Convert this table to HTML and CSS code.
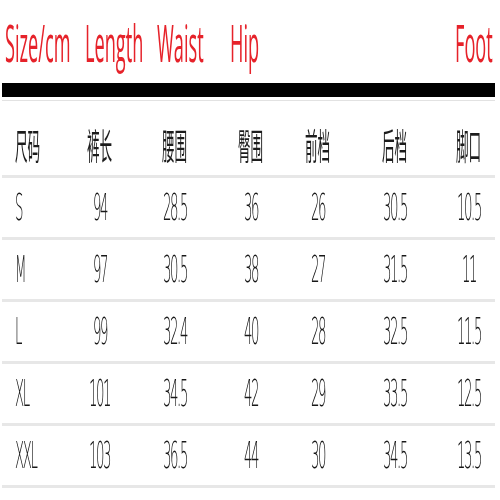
FILE: index.html
```html
<!DOCTYPE html>
<html lang="zh">
<head>
<meta charset="utf-8">
<title>Size chart</title>
<link rel="stylesheet" href="styles.css">
</head>
<body>
<div class="sheet">
  <div class="title">
    <span class="tx">Size/cm</span>
    <span class="tx">Length</span>
    <span class="tx">Waist</span>
    <span class="tx">Hip</span>
    <span class="tx foot">Foot</span>
  </div>
  <div class="bar"></div>
  <div class="table">
    <div class="row head">
      <span class="tx c1">尺码</span><span class="tx">裤长</span><span class="tx">腰围</span><span class="tx">臀围</span><span class="tx">前档</span><span class="tx">后档</span><span class="tx">脚口</span>
    </div>
    <div class="row">
      <span class="tx c1">S</span><span class="tx">94</span><span class="tx">28.5</span><span class="tx">36</span><span class="tx">26</span><span class="tx">30.5</span><span class="tx">10.5</span>
    </div>
    <div class="row">
      <span class="tx c1">M</span><span class="tx">97</span><span class="tx">30.5</span><span class="tx">38</span><span class="tx">27</span><span class="tx">31.5</span><span class="tx">11</span>
    </div>
    <div class="row">
      <span class="tx c1">L</span><span class="tx">99</span><span class="tx">32.4</span><span class="tx">40</span><span class="tx">28</span><span class="tx">32.5</span><span class="tx">11.5</span>
    </div>
    <div class="row">
      <span class="tx c1">XL</span><span class="tx">101</span><span class="tx">34.5</span><span class="tx">42</span><span class="tx">29</span><span class="tx">33.5</span><span class="tx">12.5</span>
    </div>
    <div class="row">
      <span class="tx c1">XXL</span><span class="tx">103</span><span class="tx">36.5</span><span class="tx">44</span><span class="tx">30</span><span class="tx">34.5</span><span class="tx">13.5</span>
    </div>
  </div>
</div>
</body>
</html>
```

FILE: styles.css
```css
html, body {
  margin: 0;
  padding: 0;
  background: #ffffff;
}

.sheet {
  width: 500px;
}

/* the chart's lettering is tall and narrow: small type stretched vertically */
.tx {
  display: inline-block;
  white-space: nowrap;
  transform: scaleY(2.857);
  transform-origin: 50% 50%;
  will-change: transform;
}

.title {
  display: grid;
  grid-template-columns: 80px 72px 73px 1fr auto;
  align-items: center;
  height: 52px;
  padding: 16px 7px 0 5px;
  font-family: "Open Sans", "Liberation Sans", sans-serif;
  font-size: 18.2px;
  line-height: 18.2px;
  color: #e6222a;
}

.title .foot {
  justify-self: end;
}

.bar {
  margin: 15px 0 0 2px;
  width: 493px;
  height: 14px;
  background: #000000;
}

.table {
  margin: 3px 0 0 2px;
  width: 493px;
  border-top: 1px solid #e2e2e2;
}

.row {
  display: grid;
  grid-template-columns: 61px 74px 76px 76px 58px 96px 52px;
  align-items: center;
  justify-items: center;
  height: 62px;
  box-sizing: border-box;
  border-bottom: 3px solid #e7e7e7;
  font-family: "DejaVu Sans", sans-serif;
  font-weight: 200;
  font-size: 13.3px;
  line-height: 13.3px;
  letter-spacing: -1.4px;
  color: #181818;
}

.row .c1 {
  justify-self: start;
  margin-left: 13px;
}

.row.head {
  height: 77px;
  padding-top: 17px;
  font-family: "Noto Sans CJK SC", sans-serif;
  font-weight: 400;
  font-size: 12.6px;
  line-height: 12.6px;
  letter-spacing: 0;
  color: #1c1c1c;
}
```
